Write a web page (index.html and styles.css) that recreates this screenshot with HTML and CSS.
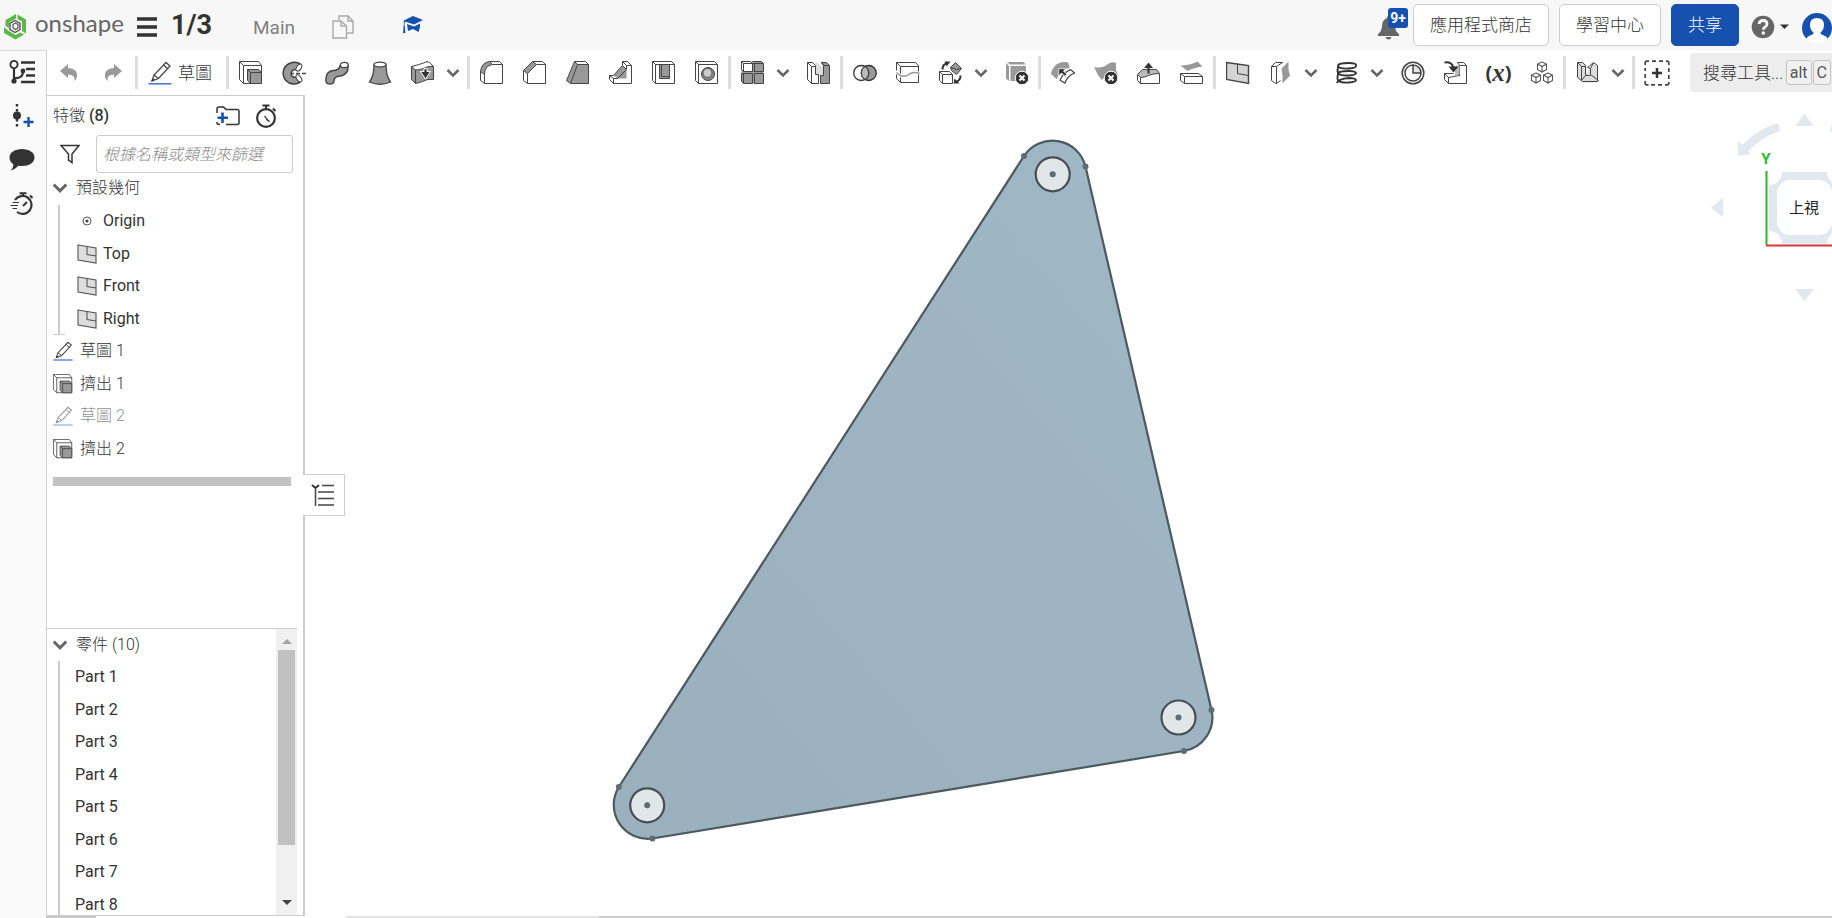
FILE: index.html
```html
<!DOCTYPE html>
<html lang="zh-Hant">
<head>
<meta charset="utf-8">
<title>1/3 - Main</title>
<link rel="stylesheet" href="styles.css">
</head>
<body>
<svg class="sprite" aria-hidden="true">
  <symbol id="chev" viewBox="0 0 14 10"><path d="M1.500 2 7 7.500 12.500 2" fill="none" stroke="#666" stroke-width="2.600"/></symbol>
  <symbol id="pencil" viewBox="0 0 24 24"><path d="M4 20l2-6L18 1.500l4 3.500L10.500 17.500z" fill="#fff" stroke="#444" stroke-width="1.300"/><path d="M6 14l4.500 3.500M15.500 4l4 3.500M4 20l2.500-2" fill="none" stroke="#444" stroke-width="1.200"/><path d="M3.500 20.500l.8-2.700 2 1.600z" fill="#333"/><path d="M.5 22.800H23.500" stroke="#3f74cc" stroke-width="1.500"/></symbol>
  <symbol id="extrude" viewBox="0.5 0.5 24 24"><path d="M1 1H20L23 5V23H5L1 19Z" fill="#fff"/><path d="M1 1H20L23 5V23H5L1 19ZM1 1l4 4M5 5H23M5 5V23" class="ln"/><path d="M9 9H20l3 3V23H12l-3-3Z" fill="#999" stroke="#444"/><path d="M9 9L12 12H23M12 12V23" class="ln"/></symbol>
  <symbol id="plane" viewBox="0.5 0.5 24 24"><path d="M1 2L23 5V23L1 19Z" fill="#d4d4d4" stroke="#444" stroke-width="1.400"/><path d="M12 3V13L23 15" class="ln"/></symbol>
  <symbol id="folder" viewBox="0 0 24 20"><path d="M1 7V3Q1 1 3 1H7.500L10 3.500H21Q23 3.500 23 5.500V17Q23 18.500 21 18.500H10M1 16V17Q1 18.500 4 18.500" fill="none" stroke="#333" stroke-width="1.500"/><path d="M6.500 6.500V17M1.500 11.800H12" stroke="#1651b0" stroke-width="2.600"/></symbol>
  <symbol id="watch" viewBox="0 0 24 24"><circle cx="12" cy="14" r="8.900" fill="none" stroke="#333" stroke-width="2.200"/><path d="M8.500 1.500H15.500M12 1.500V5M19 4.500L21.500 7" stroke="#333" stroke-width="2"/><path d="M10.500 12L15.500 17.500L13.500 16.800Z" stroke="#333" fill="#333"/></symbol>
  <symbol id="undo" viewBox="0 0 18 17"><path d="M0 7L8 0V4Q16 4.500 17 10Q17.500 14 14.500 17Q15.500 10.500 8 10.500V14Z" fill="#999"/></symbol>
  <symbol id="revolve" viewBox="0 0 24 24"><path d="M19 3.500Q15 .5 10 1.500Q1 4 1 12.500Q2 22 11 23Q16 23.500 19 20L15.500 15.500Q12 17.500 10 15Q8 12 10.500 9.500Q12.500 8 15 9Z" fill="#999" stroke="#3a3a3a" stroke-width="1.400"/><ellipse cx="17.300" cy="6.500" rx="2.200" ry="4" transform="rotate(35 17 6)" fill="#fff" stroke="#3a3a3a"/><ellipse cx="17.300" cy="17.500" rx="2.200" ry="4" transform="rotate(-35 17 18)" fill="#fff" stroke="#3a3a3a"/><path d="M9 12.500H12M14 12.500H18M20 12.500H24" stroke="#444" stroke-width="1.500"/></symbol>
  <symbol id="sweep" viewBox="0 0 24 24"><path d="M1 20Q0 11 8 9.500Q14 9.500 15.500 4L23 4Q24 13 16 15Q9 15 9 20Q9 23 5 23Q1 23 1 20Z" fill="#999" stroke="#444" stroke-width="1.400"/><ellipse cx="19.300" cy="4" rx="3.900" ry="2.700" fill="#fff" stroke="#444" stroke-width="1.200"/></symbol>
  <symbol id="loft" viewBox="0 0 24 24"><path d="M6 3.500Q6 15 1.500 21Q12 25.500 22.500 21Q18 15 18 3.500Z" fill="#999" stroke="#444" stroke-width="1.300"/><ellipse cx="12" cy="3.500" rx="6" ry="2.400" fill="#fff" stroke="#444" stroke-width="1.200"/></symbol>
  <symbol id="thicken" viewBox="0.5 0.5 24 24"><path d="M1 6Q9 4 13 2.500Q17 0 19 2L23 6V19Q17 18 12 21Q8 22.500 5 23L1 19Z" fill="#999"/><path d="M1 6Q9 4 13 2.500Q17 0 19 2L23 6Q18 5 14 7.500Q8 10 5 9Z" fill="#fff"/><path d="M1 6Q9 4 13 2.500Q17 0 19 2L23 6V19Q17 18 12 21Q8 22.500 5 23L1 19ZM1 6L5 9.500V23M5 9.500Q10 9.500 14 7.500Q18 5 23 6" class="ln"/><path d="M11 11H13.500V8H16.500V11H20L15 18.500L10 11Z" fill="#333" stroke="#fff"/></symbol>
  <symbol id="fillet" viewBox="0.5 0.5 24 24"><path d="M1 23V11Q2 2 10 1H20L23 4V23H4L1 20Z" fill="#fff"/><path d="M1 11Q2 2 10 1L13 4Q5 5 5 14Z" fill="#999"/><path d="M1 20V11Q2 2 10 1H20L23 4V23H5L1 20ZM5 23V14Q5 5 13 4H23M10 1L13 4M1 11L5 14" class="ln"/></symbol>
  <symbol id="chamfer" viewBox="0.5 0.5 24 24"><path d="M1 20V10L10 1H20L23 4V23H5Z" fill="#fff"/><path d="M1 10L10 1L14 4L5 13Z" fill="#999"/><path d="M1 20V10L10 1H20L23 4V23H5ZM5 23V13L14 4H23M10 1L14 4M1 10L5 13" class="ln"/></symbol>
  <symbol id="draft" viewBox="0.5 0.5 24 24"><path d="M1 20L9 1H20L23 4V23H5Z" fill="#999"/><path d="M9 1H20L23 4H12Z" fill="#fff"/><path d="M1 20L9 1H20L23 4V23H5ZM5 23L12 4H23M9 1L12 4" class="ln"/></symbol>
  <symbol id="rib" viewBox="0.5 0.5 24 24"><path d="M1 16L5 15L14 5V1H19L23 5V23H5L1 19Z" fill="#fff"/><path d="M5 15L14 5L18 9V18H9Z" fill="#999"/><path d="M1 15L5 15L14 5V1H19L23 5V23H5L1 19ZM14 1L18 5H23M18 5V9L9 18H5V23M1 15L5 18M14 5L18 9" class="ln"/></symbol>
  <symbol id="shell" viewBox="0.5 0.5 24 24"><path d="M1 1H20L23 4V23H4L1 20Z" fill="#fff"/><path d="M8 4H18V18H8Z" fill="#999"/><path d="M1 1H20L23 4V23H4L1 20ZM1 1L4 4H23M4 4V23M8 4V18H18V4M10 4V16H18" class="ln"/></symbol>
  <symbol id="hole" viewBox="0.5 0.5 24 24"><path d="M1 1H20L23 4V23H4L1 20Z" fill="#fff"/><path d="M1 1H20L23 4V23H4L1 20ZM1 1L4 4H23M4 4V23" class="ln"/><circle cx="13.500" cy="13.500" r="6.500" fill="#888" stroke="#444"/><circle cx="13" cy="12.500" r="4.500" fill="#ccc" stroke="#555"/></symbol>
  <symbol id="pattern" viewBox="0.5 0.5 24 24"><path d="M1 1H21L23 4V23H3L1 21Z" fill="#999"/><path d="M1 1H11L12 4V11H3L1 9Z" fill="#fff"/><path d="M1 1H10L12 3V11H3L1 9ZM12 1H21L23 3V11H13M1 13H12V23H3L1 21ZM14 13H23V23H14ZM1 1L3 3H23M3 3V11M14 3V11M3 13V23" class="ln"/></symbol>
  <symbol id="mirror" viewBox="0.5 0.5 24 24"><path d="M9 1L17 7V18L9 14Z" fill="#ddd"/><path d="M1 2H6L9 5V14H12V23H5L1 19Z" fill="#fff" stroke="#444"/><path d="M1 2L5 6H9M5 6V23" class="ln"/><path d="M15 2H20L23 5V23H14V15H17V5Z" fill="#999" stroke="#444"/><path d="M15 2L17 5H23" class="ln"/></symbol>
  <symbol id="boolean" viewBox="0 0 24 24"><circle cx="15.800" cy="12" r="7.500" fill="#999" stroke="#333" stroke-width="1.300"/><circle cx="8.200" cy="12" r="7.500" fill="none" stroke="#333" stroke-width="1.300"/><path d="M12 5.500A7.500 7.500 0 0 1 12 18.500A7.500 7.500 0 0 1 12 5.500" fill="#bbb" stroke="#333"/></symbol>
  <symbol id="split" viewBox="0.5 0.5 24 24"><path d="M1 2H20L23 5V22H5L1 18Z" fill="#fff"/><path d="M1 10V2H20L23 5V11M1 2L5 6H23M5 6V13M5 17V22H23V14M5 22L1 18V14" class="ln"/><path d="M1 12L5 15Q10 17 14 13.500Q19 11 24 13" fill="none" stroke="#999" stroke-width="1.500"/></symbol>
  <symbol id="transform" viewBox="0.5 0.5 24 24"><path d="M1 11H11L14 14V23H4L1 20Z" fill="#fff"/><path d="M1 11H11L14 14V23H4L1 20ZM1 11L4 14H14M4 14V23" class="ln"/><path d="M12 7L17 2L23 8L18 14L13 10Z" fill="#999" stroke="#444"/><path d="M12 7L18 9L23 8" class="ln"/><path d="M4 9Q4 4 8 3" fill="none" stroke="#333" stroke-width="2"/><path d="M6 1L12 1L8 6ZM16 18L21 23H15Z" fill="#333"/><path d="M18 21Q22 20 22 15" fill="none" stroke="#333" stroke-width="2"/></symbol>
  <symbol id="delpart" viewBox="0 0 24 24"><path d="M2 1H18L21 3.500H5ZM1 2L4 5V20L1 17.500ZM5.500 5H21V20H5.500Z" fill="#999"/><circle cx="17" cy="17" r="6.800" fill="#333" stroke="#fff"/><path d="M14.500 14.500L19.500 19.500M19.500 14.500L14.500 19.500" stroke="#fff" stroke-width="2"/></symbol>
  <symbol id="modfillet" viewBox="0 0 25 24"><path d="M0 13Q2 3 10 1Q14 0 18 1L19.500 6.500Q9 9 6 18.500Z" fill="#999"/><path d="M9.500 19.500Q12 12 20.500 8.500L24.500 12Q17 15 14.500 22.500Z" fill="#fff" stroke="#444" stroke-width="1.300"/><path d="M8 7.500H15.500L13 10L16.500 13.500L14.500 15.500L11 12L8 15Z" fill="#333" stroke="#fff" stroke-width=".8"/></symbol>
  <symbol id="delface" viewBox="0 0 24 24"><path d="M0 6Q8 8 14 3Q18 0 22 2V9L24 14Q14 12 8 19L4 14Z" fill="#999"/><circle cx="17" cy="17" r="6.800" fill="#333" stroke="#fff"/><path d="M14.500 14.500L19.500 19.500M19.500 14.500L14.500 19.500" stroke="#fff" stroke-width="2"/></symbol>
  <symbol id="moveface" viewBox="0.5 0.5 24 24"><path d="M1 14L6 9H20L23 13V23H4L1 20Z" fill="#fff"/><path d="M1 14L6 9H20L23 13Q14 14 12 15Q8 17 4 17Z" fill="#bbb"/><path d="M1 14L6 9H20L23 13V23H4L1 20ZM1 14L4 17Q8 17 12 15Q16 13 23 13M4 17V23" class="ln"/><path d="M12 13V6" stroke="#333" stroke-width="2.200"/><path d="M7.500 7.500L12 2L16.500 7.500Z" fill="#333"/></symbol>
  <symbol id="repface" viewBox="0.5 0.5 24 24"><path d="M1 5Q10 5 18 1L23 6Q14 7 8 10.500Z" fill="#999"/><path d="M1 13H19L23 16V23H5L1 20Z" fill="#fff"/><path d="M1 13H19L23 16V23H5L1 20ZM1 13L5 16H23M5 16V23" class="ln"/></symbol>
  <symbol id="surface" viewBox="0.5 0.5 24 24"><path d="M3 6L7 2H14V19L9 23L3 21Z" fill="#fff"/><path d="M3 6L7 2H14M3 6V20L7 23M3 6H8L14 2M8 6V23L12 20M7 23H8" class="ln"/><path d="M13 8L20 1V9L21.500 15L14 23V15Z" fill="#999"/></symbol>
  <symbol id="helix" viewBox="0 0 24 24"><path d="M21 5Q22 2 14 2Q3 2 3 5Q4 8 14 7.500Q21 7 21 5M3 6Q2 10 3 12Q5 15 14 14.500Q21 14 21 12Q20 10 14 10Q3 10 3 13M3 13Q2 18 3 19.500Q6 22 14 21.500Q21 21 21 19Q20 17 14 17Q3 18 2 22" fill="none" stroke="#333" stroke-width="1.900"/></symbol>
  <symbol id="curve" viewBox="0 0 24 24"><circle cx="12" cy="12" r="10.800" fill="#fff" stroke="#444" stroke-width="1.500"/><path d="M12 4A8 8 0 1 0 20 12" fill="none" stroke="#444" stroke-width="1.500"/><path d="M12 4V12H20A8 8 0 0 0 12 4Z" fill="#e4e4e4" stroke="#444" stroke-width="1.500"/></symbol>
  <symbol id="derive" viewBox="0.5 0.5 24 24"><path d="M12 2H20L23 5V23H5L1 19V13H9Z" fill="#fff"/><path d="M14 2H20L23 5V23H5L1 19V13H10M14 2L16 5H23M16 5V15L5 17L1 13M5 17V23M16 15L12 11" class="ln"/><path d="M12 5L16 5V14L10 16L12 12Z" fill="#bbb"/><path d="M1 2Q8 1 10 7" fill="none" stroke="#333" stroke-width="2"/><path d="M5 6H15L10 12Z" fill="#333"/></symbol>
  <symbol id="cubes" viewBox="0 0 24 24"><path id="cb" d="M12 1L16.500 3V8.500L12 11L7.500 8.500V3ZM7.500 3L12 5.500L16.500 3M12 5.500V11" fill="#fff" stroke="#555" stroke-width="1.100"/><use href="#cb" x="-6" y="11"/><use href="#cb" x="6" y="11"/></symbol>
  <symbol id="frame" viewBox="0.5 0.5 24 24"><path d="M2 2H8L11 5V13L18 2L22 5V16L23 22H8L2 17Z" fill="#ddd"/><path d="M2 2H7L10 5V15M2 2V17L7 21H22L23 20L15 14V8L18 2L22 5V20M2 2L6 6H10M6 6V20M10 15L6 20M10 15H15M15 8L12 7L18 2" class="ln"/></symbol>
  <symbol id="custom" viewBox="0 0 26 26"><path d="M5 1.200H3Q1.200 1.200 1.200 3V5M8 1.200H12M15 1.200H19M22 1.200H23Q24.800 1.200 24.800 3V5M24.800 8V12M24.800 15V19M24.800 22V23Q24.800 24.800 23 24.800H21M18 24.800H14M11 24.800H7M4.500 24.800H3Q1.200 24.800 1.200 23V21M1.200 18V14M1.200 11V8" fill="none" stroke="#444" stroke-width="1.700"/><path d="M13 8V18M8 13H18" stroke="#333" stroke-width="2.500"/></symbol>
  <symbol id="plane-s" viewBox="0 0 20 20"><path d="M1 1L19 4V19L1 16Z" fill="#ddd" stroke="#555" stroke-width="1.100"/><path d="M10 2.500V10.500L19 12" fill="none" stroke="#555" stroke-width="1.100"/></symbol>
</svg>

<header class="topbar">
  <a class="brand" href="#">
    <svg width="26" height="28" viewBox="0 0 26 28"><path d="M14 2L3.500 8V14L7 16V10.500L14 6.500ZM15.500 2.500V7L20 9.500V19L24 21.500V7.500ZM2 15V21L13.500 27.500L22 22.500L18.500 20.500L13.500 23L6 18.500Z" fill="#5bb947"/><path d="M13 8.500L18 11.500V17.500L13 20.500L8 17.500V11.500Z" fill="#f7f7f7" stroke="#555" stroke-width="1.400"/><path d="M13.500 11L16 12.500V16L13.500 17.500L11 16V12.500Z" fill="none" stroke="#555" stroke-width="1.200"/></svg>
    <span>onshape</span>
  </a>
  <button class="plain menu" aria-label="選單"><svg width="20" height="20" viewBox="0 0 20 20"><path d="M0 2H20M0 10H20M0 18H20" stroke="#333" stroke-width="3.600"/></svg></button>
  <h1 class="doc-name">1/3</h1>
  <span class="branch">Main</span>
  <button class="plain copy" aria-label="複製"><svg width="22" height="24" viewBox="0 0 22 24"><path d="M7 5V1H16L21 6V18H15M16 1V6H21" fill="none" stroke="#aaa" stroke-width="1.400"/><path d="M1 6H9L14.500 11V23H1ZM9 6V11H14.500" fill="#f7f7f7" stroke="#aaa" stroke-width="1.400"/></svg></button>
  <button class="plain learn" aria-label="學習"><svg width="20" height="18" viewBox="0 0 20 18"><path d="M10 0L20 4L11 8.500L2 5.500L1.500 8L2.500 17H0L.8 8V4.500Z" fill="#1651b0"/><path d="M4 8L11 10.500L17 7.500V11L15.500 16L10 13L5 15Z" fill="#1651b0"/></svg></button>
  <div class="top-right">
    <button class="plain bell" aria-label="通知"><svg width="22" height="24" viewBox="0 0 22 24"><path d="M10.500 0Q12 0 12 2Q17 4 17 10Q17 15 21 18V20H0V18Q4 15 4 10Q4 4 9 2Q9 0 10.500 0ZM7.500 21H13.500Q13 23.500 10.500 23.500Q8 23.500 7.500 21Z" fill="#666"/></svg><span class="badge">9+</span></button>
    <button class="btn">應用程式商店</button>
    <button class="btn">學習中心</button>
    <button class="btn primary">共享</button>
    <button class="plain help" aria-label="說明"><svg width="38" height="24" viewBox="0 0 38 24"><circle cx="12" cy="12" r="11.300" fill="#666"/><path d="M8 9Q8.500 5.500 12 5.500Q16 5.500 16 9Q16 11 14 12Q12.300 13 12.300 14.800" fill="none" stroke="#f7f7f7" stroke-width="2.800"/><circle cx="12.300" cy="18" r="1.800" fill="#f7f7f7"/><path d="M29 9.500H38L33.500 14Z" fill="#333"/></svg></button>
    <button class="plain avatar" aria-label="帳戶"><svg width="30" height="30" viewBox="0 0 30 30"><circle cx="15" cy="15" r="15" fill="#1651b0"/><path d="M15 5Q22 5 22 12Q22 17 18.500 19.500Q18 21 21 22Q25 23.500 26 26Q20 31 15 30Q9 31 4 26Q5 23.500 9 22Q12 21 11.500 19.500Q8 17 8 12Q8 5 15 5Z" fill="#fff"/></svg></button>
  </div>
</header>

<div class="workspace">
  <nav class="rail">
    <button class="plain" aria-label="特徵樹"><svg width="26" height="24" viewBox="0 0 26 24"><circle cx="5" cy="4.500" r="3.600" fill="none" stroke="#333" stroke-width="1.900"/><path d="M5 8V22M5 18Q14 19 14 11" fill="none" stroke="#333" stroke-width="2.200"/><circle cx="5" cy="21" r="2.600" fill="#333"/><circle cx="14" cy="11" r="2.400" fill="#333"/><path d="M12 2.500H26M17 9H26M17 15.500H26M12 22H26" stroke="#333" stroke-width="2.300"/></svg></button>
    <button class="plain" aria-label="插入版本"><svg width="26" height="24" viewBox="0 0 26 24"><path d="M8 0V24" stroke="#333" stroke-width="2.400" stroke-dasharray="2.500 2.500"/><circle cx="8" cy="11.500" r="4" fill="#333"/><path d="M19.500 13V23M14.500 18H24.500" stroke="#1651b0" stroke-width="2.400"/></svg></button>
    <button class="plain" aria-label="評論"><svg width="26" height="24" viewBox="0 0 26 24"><path d="M13 1C20 1 25.500 4.500 25.500 9.500S20 18 13 18Q11 18 9.500 17.700Q6 21.500 1.500 22.500Q4.500 19.500 4.500 16.500Q.5 13.500 .5 9.500C.5 4.500 6 1 13 1Z" fill="#333"/></svg></button>
    <button class="plain" aria-label="效能"><svg width="26" height="24" viewBox="0 0 26 24"><path d="M6 8A9 9 0 1 1 8 20" fill="none" stroke="#333" stroke-width="2.200"/><path d="M10.500 1.200H17.500M14 1.200V5M21 3.500L23.500 6M14 14L18 10" stroke="#333" stroke-width="2"/><path d="M3.500 10.500H10M1.500 13.500H9M3.500 16.500H8" stroke="#333" stroke-width="1.200"/></svg></button>
  </nav>

  <div class="main">
    <div class="toolbar">
      <button class="tool hist" aria-label="復原"><svg width="18" height="17"><use href="#undo"/></svg></button>
      <button class="tool hist" aria-label="重做"><svg width="18" height="17" viewBox="0 0 18 17"><g transform="matrix(-1 0 0 1 18 0)"><use href="#undo" width="18" height="17"/></g></svg></button>
      <i class="sep"></i>
      <button class="tool sketch"><svg width="24" height="24"><use href="#pencil"/></svg><span>草圖</span></button>
      <i class="sep"></i>
      <button class="tool" aria-label="擠出"><svg><use href="#extrude"/></svg></button>
      <button class="tool" aria-label="旋轉"><svg><use href="#revolve"/></svg></button>
      <button class="tool" aria-label="掃掠"><svg><use href="#sweep"/></svg></button>
      <button class="tool" aria-label="疊層"><svg><use href="#loft"/></svg></button>
      <button class="tool" aria-label="加厚"><svg><use href="#thicken"/></svg></button>
      <button class="drop" aria-label="更多"><svg><use href="#chev"/></svg></button>
      <i class="sep"></i>
      <button class="tool" aria-label="圓角"><svg><use href="#fillet"/></svg></button>
      <button class="tool" aria-label="倒角"><svg><use href="#chamfer"/></svg></button>
      <button class="tool" aria-label="拔模"><svg><use href="#draft"/></svg></button>
      <button class="tool" aria-label="肋"><svg><use href="#rib"/></svg></button>
      <button class="tool" aria-label="薄殼"><svg><use href="#shell"/></svg></button>
      <button class="tool" aria-label="孔"><svg><use href="#hole"/></svg></button>
      <i class="sep"></i>
      <button class="tool" aria-label="陣列"><svg><use href="#pattern"/></svg></button>
      <button class="drop" aria-label="更多陣列"><svg><use href="#chev"/></svg></button>
      <button class="tool" aria-label="鏡射"><svg><use href="#mirror"/></svg></button>
      <i class="sep"></i>
      <button class="tool" aria-label="布林"><svg><use href="#boolean"/></svg></button>
      <button class="tool" aria-label="分割"><svg><use href="#split"/></svg></button>
      <button class="tool" aria-label="變換"><svg><use href="#transform"/></svg></button>
      <button class="drop" aria-label="更多變換"><svg><use href="#chev"/></svg></button>
      <button class="tool" aria-label="刪除零件"><svg><use href="#delpart"/></svg></button>
      <i class="sep"></i>
      <button class="tool" aria-label="修改圓角"><svg><use href="#modfillet"/></svg></button>
      <button class="tool" aria-label="刪除面"><svg><use href="#delface"/></svg></button>
      <button class="tool" aria-label="移動面"><svg><use href="#moveface"/></svg></button>
      <button class="tool" aria-label="替換面"><svg><use href="#repface"/></svg></button>
      <i class="sep"></i>
      <button class="tool" aria-label="平面"><svg><use href="#plane"/></svg></button>
      <button class="tool" aria-label="曲面"><svg><use href="#surface"/></svg></button>
      <button class="drop" aria-label="更多曲面"><svg><use href="#chev"/></svg></button>
      <button class="tool" aria-label="螺旋"><svg><use href="#helix"/></svg></button>
      <button class="drop" aria-label="更多曲線"><svg><use href="#chev"/></svg></button>
      <button class="tool" aria-label="複合曲線"><svg><use href="#curve"/></svg></button>
      <button class="tool" aria-label="衍生"><svg><use href="#derive"/></svg></button>
      <button class="tool var" aria-label="變數">(<em>x</em>)</button>
      <button class="tool" aria-label="組態"><svg><use href="#cubes"/></svg></button>
      <i class="sep"></i>
      <button class="tool" aria-label="框架"><svg><use href="#frame"/></svg></button>
      <button class="drop" aria-label="更多框架"><svg><use href="#chev"/></svg></button>
      <i class="sep"></i>
      <button class="tool custom" aria-label="新增自訂特徵"><svg><use href="#custom"/></svg></button>
      <button class="search"><span>搜尋工具...</span><kbd>alt</kbd><kbd>C</kbd></button>
    </div>

    <div class="body">
      <aside class="panel">
        <section class="features">
          <div class="panel-head">
            <h2>特徵 <b>(8)</b></h2>
            <button class="plain" aria-label="新增資料夾"><svg width="24" height="20"><use href="#folder"/></svg></button>
            <button class="plain" aria-label="重建時間"><svg width="24" height="24"><use href="#watch"/></svg></button>
          </div>
          <div class="filter">
            <svg width="20" height="20" viewBox="0 0 20 20"><path d="M1 1.500H19L12 10V18.500L8.500 16V10Z" fill="none" stroke="#333" stroke-width="1.500"/></svg>
            <input type="text" aria-label="篩選" placeholder="根據名稱或類型來篩選">
          </div>
          <button class="group"><svg><use href="#chev"/></svg>預設幾何</button>
          <ul class="rows geometry">
            <li><svg viewBox="0 0 20 20"><circle cx="10" cy="10" r="4" fill="none" stroke="#555"/><circle cx="10" cy="10" r="1.600" fill="#444"/></svg>Origin</li>
            <li><svg><use href="#plane-s"/></svg>Top</li>
            <li><svg><use href="#plane-s"/></svg>Front</li>
            <li><svg><use href="#plane-s"/></svg>Right</li>
          </ul>
          <ul class="rows steps">
            <li><svg><use href="#pencil"/></svg>草圖 1</li>
            <li><svg><use href="#extrude"/></svg>擠出 1</li>
            <li class="dim"><svg><use href="#pencil"/></svg>草圖 2</li>
            <li><svg><use href="#extrude"/></svg>擠出 2</li>
          </ul>
          <div class="rollback"></div>
        </section>
        <section class="parts">
          <div class="parts-list">
            <button class="group"><svg><use href="#chev"/></svg>零件 (10)</button>
            <ul class="rows part-rows">
              <li>Part 1</li><li>Part 2</li><li>Part 3</li><li>Part 4</li><li>Part 5</li><li>Part 6</li><li>Part 7</li><li>Part 8</li>
            </ul>
          </div>
          <div class="scroll">
            <svg width="10" height="5" viewBox="0 0 10 5"><path d="M0 5L5 0L10 5Z" fill="#a3a3a3"/></svg>
            <div class="track"><div class="thumb"></div></div>
            <svg width="10" height="5" viewBox="0 0 10 5"><path d="M0 0L5 5L10 0Z" fill="#444"/></svg>
          </div>
        </section>
        <button class="toggle" aria-label="切換特徵清單"><svg width="24" height="24" viewBox="0 0 24 24"><path d="M1 2L4.500 5L8 2" fill="none" stroke="#333" stroke-width="2"/><path d="M4.500 6V23M11 2.500H23M7 9H23M7 15.500H23M7 22H23" stroke="#444" stroke-width="1.500"/></svg></button>
      </aside>

      <main class="view">
        <svg class="model" viewBox="305 95 1527 821">
          <defs><linearGradient id="face" x1="0" y1="1" x2="1" y2="0"><stop offset="0" stop-color="#9bb0bd"/><stop offset="1" stop-color="#a0b7c5"/></linearGradient></defs>
          <path d="M618.800 787L1024 156A34 34 0 0 1 1085.500 166.500L1211.500 710A34 34 0 0 1 1184 751L652.400 838.500A34 34 0 0 1 618.800 787Z" fill="url(#face)" stroke="#4d5960" stroke-width="2.200"/>
          <g fill="#e1e6e9" stroke="#474f54" stroke-width="2.200"><circle cx="1052.700" cy="174.300" r="17"/><circle cx="1178.500" cy="717.500" r="17"/><circle cx="647.200" cy="805.300" r="17"/></g>
          <g fill="#5d6c76"><circle cx="1052.700" cy="174.300" r="3"/><circle cx="1178.500" cy="717.500" r="3"/><circle cx="647.200" cy="805.300" r="3"/><circle cx="618.800" cy="787" r="3"/><circle cx="1024" cy="156" r="3"/><circle cx="1085.500" cy="166.500" r="3"/><circle cx="1211.500" cy="710" r="3"/><circle cx="1184" cy="751" r="3"/><circle cx="652.400" cy="838.500" r="3"/></g>
          <g fill="#e1e8ef">
            <path d="M1795 126L1804.500 114L1814 126ZM1795 289H1814L1804.500 301ZM1723 198V217L1711 207.500Z"/>
            <path d="M1778 123L1780 131Q1762 137 1748 151L1751 154L1738 156L1738 141L1742 145Q1758 129 1778 123ZM1832 124L1830 131L1840 136V128Z"/>
            <path d="M1782 172H1827A13 13 0 0 0 1840 185V231A13 13 0 0 0 1827 244H1782A13 13 0 0 0 1769 231V185A13 13 0 0 0 1782 172Z"/>
          </g>
          <rect x="1777" y="180" width="55" height="55" rx="13" fill="#fff"/>
          <path d="M1766.500 171V245" stroke="#2db52d" stroke-width="2"/>
          <path d="M1766 245.500H1832" stroke="#d9383a" stroke-width="2"/>
          <text x="1766" y="164" class="axis">Y</text>
          <text x="1804" y="213" class="cube">上視</text>
        </svg>
      </main>
    </div>
    <div class="tabs"><i class="tab-a"></i><i class="tab-b"></i><i class="tab-c"></i></div>
  </div>
</div>
</body>
</html>
```
FILE: styles.css
```css
* { box-sizing: border-box; }

body {
  margin: 0;
  height: 100vh;
  display: flex;
  flex-direction: column;
  overflow: hidden;
  background: #fff;
  color: #333;
  font: 16px/20px Roboto, "Noto Sans CJK TC", sans-serif;
}

button {
  font: inherit;
  color: inherit;
  margin: 0;
  padding: 0;
  border: 0;
  background: none;
}

svg { display: block; flex: none; }
.sprite { position: absolute; width: 0; height: 0; }
.ln { fill: none; stroke: #444; stroke-width: 1; }

/* top bar */
.topbar {
  flex: none;
  height: 50px;
  display: flex;
  align-items: center;
  padding-left: 2px;
  background: #f7f7f7;
  white-space: nowrap;
}
.brand {
  display: flex;
  align-items: center;
  gap: 7px;
  width: 135px;
  color: #666;
  text-decoration: none;
  font: 24px/28px Lato, sans-serif;
}
.brand svg { margin-top: 2px; }
.brand span { margin-top: -4px; }
.menu { margin-top: 3px; }
.doc-name { margin: 0 0 0 14px; width: 67px; font-size: 27px; line-height: 32px; font-weight: 700; }
.branch { margin-top: 6px; width: 94px; padding-left: 15px; color: #808080; font-size: 19px; line-height: 24px; }
.copy { margin: 4px 0 0; }
.learn { margin-left: 49px; }
.top-right { margin-left: auto; display: flex; align-items: center; gap: 10px; }
.bell { position: relative; width: 25px; padding-top: 6px; }
.badge {
  position: absolute;
  left: 10px;
  top: -2px;
  width: 20px;
  height: 20px;
  border-radius: 3px;
  background: #1651b0;
  color: #fff;
  font-weight: 700;
  font-size: 14px;
  line-height: 20px;
  text-align: center;
}
.btn {
  height: 42px;
  padding: 0 16px;
  border: 1px solid #ccc;
  border-radius: 5px;
  background: #fff;
  font-size: 17px;
  font-weight: 300;
}
.primary { background: #1651b0; border-color: #1651b0; color: #fff; }
.help { margin: 4px 3px 0 2px; }
.avatar { margin-top: 6px; }

/* layout */
.workspace { flex: 1; min-height: 0; display: flex; }
.rail {
  flex: none;
  width: 47px;
  display: flex;
  flex-direction: column;
  align-items: flex-start;
  gap: 20px;
  padding: 9px 0 0 9px;
  border-top: 1px solid #d8d8d8;
  border-right: 1px solid #d0d0d0;
  background: #fafafa;
}
.main { flex: 1; min-width: 0; display: flex; flex-direction: column; }

/* toolbar */
.toolbar { flex: none; height: 45px; display: flex; align-items: center; overflow: hidden; white-space: nowrap; }
.tool { flex: none; width: 43px; height: 40px; display: flex; align-items: center; justify-content: center; }
.tool svg { width: 24px; height: 24px; }
.hist { width: 44px; }
.hist svg { width: 18px; height: 17px; }
.drop { flex: none; width: 23px; }
.drop svg { width: 14px; height: 10px; margin-left: 2px; }
.sep { flex: none; width: 3px; height: 33px; background: #dedede; }
.sketch { width: 88px; gap: 6px; justify-content: flex-start; padding-left: 10px; font-size: 17px; font-weight: 300; }
.custom svg { width: 26px; height: 26px; }
.var { font: 700 20px/24px "Noto Sans", sans-serif; }
.var em { font-family: "Liberation Serif", serif; font-size: 25px; }
.search {
  flex: 1 0 142px;
  height: 39px;
  margin-left: 12px;
  padding-left: 13px;
  display: flex;
  align-items: center;
  border-radius: 4px 0 0 4px;
  background: #ededed;
  overflow: hidden;
  font-size: 17px;
  font-weight: 300;
}
.search span { width: 86px; text-align: left; }
.search kbd {
  flex: none;
  height: 25px;
  padding: 0 3px;
  margin-right: 1px;
  border: 1px solid #c4c4c4;
  border-radius: 3px;
  background: #f1f1f1;
  color: #555;
  font: 16px/23px Roboto, sans-serif;
}

/* feature panel */
.body { flex: 1; min-height: 0; display: flex; }
.panel {
  position: relative;
  flex: none;
  width: 258px;
  display: flex;
  flex-direction: column;
  border-top: 1px solid #ccc;
  border-right: 2px solid #ccc;
  border-bottom: 1px solid #ccc;
}
.features { flex: 1; min-height: 0; }
.panel-head { display: flex; align-items: center; height: 39px; padding: 0 25px 0 6px; gap: 14px; }
.panel-head h2 { flex: 1; margin: 0; font-size: 16px; line-height: 20px; font-weight: 300; }
.panel-head b { font-weight: 500; }
.filter { display: flex; align-items: center; gap: 16px; padding: 0 10px 0 13px; }
.filter input {
  flex: 1;
  min-width: 0;
  height: 38px;
  padding: 0 26px 0 6px;
  border: 1px solid #ccc;
  border-radius: 3px;
  font: italic 300 16px/20px Roboto, "Noto Sans CJK TC", sans-serif;
}
.filter input::placeholder { color: #8a8a8a; }
.group { display: flex; align-items: center; height: 32px; padding-left: 5px; gap: 8px; font-weight: 300; }
.group svg { width: 16px; height: 12px; }
.features .group { height: 30px; }
.rows { list-style: none; margin: 0; padding: 0; display: grid; grid-auto-rows: 32px 33px; }
.rows li { display: flex; align-items: center; }
.rows svg { width: 20px; height: 20px; }
.geometry { position: relative; margin: 2px 0 0 11px; padding-left: 17px; border-left: 2px solid #ccc; }
.geometry::after { content: ""; position: absolute; left: -7px; bottom: 0; width: 12px; height: 1px; background: #ccc; }
.geometry li { gap: 6px; }
.steps { padding-left: 6px; font-weight: 300; }
.steps li { gap: 7px; }
.steps .dim { opacity: 0.55; }
.rollback { height: 9px; margin: 12px 12px 0 6px; background: #c2c2c2; }

.parts { flex: none; height: 35%; margin-right: 6px; display: flex; border-top: 1px solid #ccc; }
.parts-list { flex: 1; overflow: hidden; }
.part-rows { margin-left: 11px; padding-left: 15px; border-left: 2px solid #ccc; }
.scroll { width: 21px; padding: 10px 2px; display: flex; flex-direction: column; align-items: center; background: #f0f0f0; }
.track { flex: 1; width: 100%; padding: 6px 0; }
.thumb { height: 80%; background: #c1c1c1; }
.toggle {
  position: absolute;
  left: 256px;
  top: 378px;
  width: 42px;
  height: 42px;
  padding-left: 8px;
  border: 1px solid #ccc;
  border-left: 0;
  background: #fff;
}

/* 3D view */
.view { flex: 1; min-width: 0; }
.model { width: 100%; height: 100%; }
.axis { font: 700 15px Roboto, sans-serif; fill: #2db52d; text-anchor: middle; }
.cube { font: 15px "Noto Sans CJK TC", sans-serif; fill: #222; text-anchor: middle; }

.tabs { flex: none; height: 2px; display: flex; }
.tab-a { width: 49px; background: #c8c8c8; }
.tab-b { width: 253px; margin-left: 250px; background: #e4e4e4; }
.tab-c { flex: 1; background: #cfcfcf; }
```
